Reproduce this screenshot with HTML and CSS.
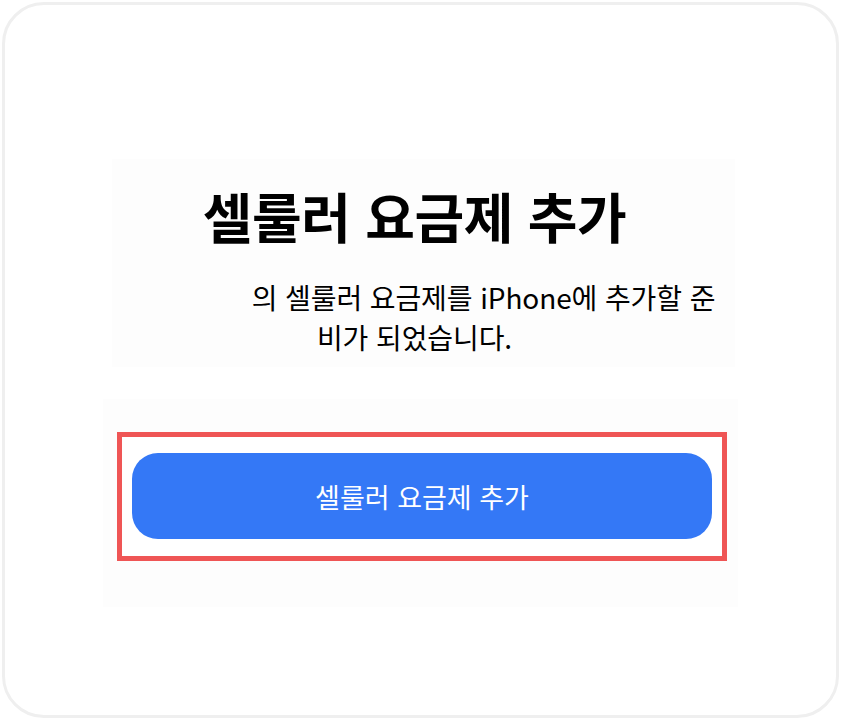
FILE: index.html
```html
<!DOCTYPE html>
<html lang="ko">
<head>
<meta charset="utf-8">
<link rel="stylesheet" href="styles.css">
</head>
<body>
<div class="card">
  <section class="intro">
    <h1 class="title">셀룰러 요금제 추가</h1>
    <p class="desc"><span class="carrier"></span>의 셀룰러 요금제를 iPhone에 추가할 준<br>비가 되었습니다.</p>
  </section>
  <section class="actions">
    <div class="highlight">
      <button class="primary">셀룰러 요금제 추가</button>
    </div>
  </section>
</div>
</body>
</html>
```
FILE: styles.css
```css
html, body {
  margin: 0;
  padding: 0;
  background: #ffffff;
}
body {
  font-family: "Noto Sans CJK KR", "Noto Sans", sans-serif;
  color: #000;
}
.card {
  box-sizing: border-box;
  margin: 2px;
  height: 716px;
  border: 3px solid #efefef;
  border-radius: 42px;
  padding-top: 154px;
  display: flex;
  flex-direction: column;
}
.intro {
  margin-left: 107px;
  width: 623px;
  height: 208px;
  background: #fdfdfd;
  box-sizing: border-box;
  padding-top: 24px;
  text-align: center;
}
.title {
  margin: 0;
  font-size: 54px;
  font-weight: 700;
  line-height: 66px;
  letter-spacing: -0.4px;
  padding-right: 18px;
}
.desc {
  margin: 28px 0 0 0;
  font-size: 28px;
  font-weight: 400;
  line-height: 40px;
  letter-spacing: -0.1px;
  padding-right: 18px;
}
.carrier {
  display: inline-block;
  width: 138px;
  height: 1px;
}
.actions {
  margin-top: 32px;
  margin-left: 98px;
  width: 635px;
  height: 208px;
  background: #fdfdfd;
  box-sizing: border-box;
  padding: 33px 11px 0 14px;
}
.highlight {
  box-sizing: border-box;
  border: 5px solid #ef5555;
  background: #fff;
  height: 129px;
  padding: 16px 10px;
}
.primary {
  display: block;
  width: 100%;
  height: 86px;
  border: none;
  border-radius: 26px;
  background: #3478f6;
  color: #fff;
  font-family: "Noto Sans CJK KR", "Noto Sans", sans-serif;
  font-size: 27px;
  font-weight: 400;
  letter-spacing: 0;
}
```
